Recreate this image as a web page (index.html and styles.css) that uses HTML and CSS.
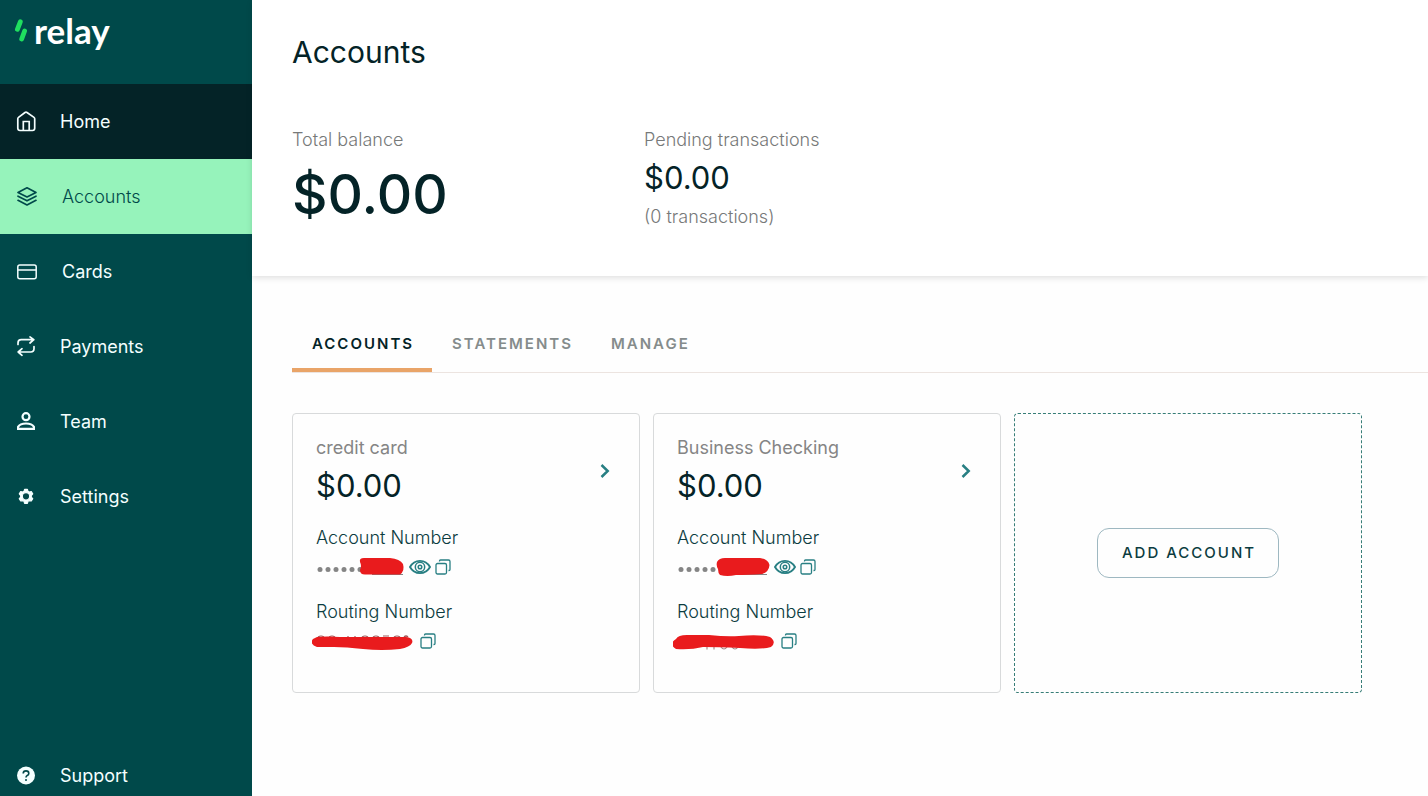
FILE: index.html
```html
<!DOCTYPE html>
<html lang="en">
<head>
<meta charset="utf-8">
<meta name="viewport" content="width=device-width, initial-scale=1">
<title>Relay - Accounts</title>
<link rel="stylesheet" href="styles.css">
</head>
<body>
<svg class="defs" aria-hidden="true">
  <symbol id="eye" viewBox="0 0 22 16"><g fill="none" stroke="currentColor"><path stroke-width="1.900" d="M1 8C5.500 -.2 16.500 -.2 21 8C16.500 16.200 5.500 16.200 1 8Z"/><circle cx="11" cy="8" r="4.700" stroke-width="1.500"/><circle cx="11" cy="8" r="1.800" stroke-width="1.500"/></g></symbol>
  <symbol id="copy" viewBox="0 0 16 16"><g fill="none" stroke="currentColor" stroke-width="1.300"><rect x="1" y="4.500" width="10.500" height="10.500" rx="1.500"/><path d="M4.500 2.500V2Q4.500 1 5.500 1H13.500Q15 1 15 2.500V10.500Q15 11.500 14 11.500H13.500"/></g></symbol>
  <symbol id="chevron" viewBox="0 0 10 16"><path d="M1.500 2L7.700 8L1.500 14" fill="none" stroke="currentColor" stroke-width="2.500"/></symbol>
</svg>
<div class="app">
  <aside class="sidebar">
    <a class="logo" href="#">
      <svg class="logo-mark" viewBox="0 0 14 26" aria-hidden="true"><g stroke="#1fdf5f" stroke-width="4.800" stroke-linecap="round"><path d="M3.400 11.300L6.300 3.800M7.700 21L10.600 13"/></g></svg>
      <span>relay</span>
    </a>
    <nav class="nav">
      <a class="nav-item home" href="#">
        <svg class="icon" viewBox="0 0 20 22" aria-hidden="true"><g fill="none" stroke="currentColor" stroke-width="1.700"><path d="M1.800 7.700Q1.800 6.900 2.500 6.400L9 1.500Q10 .8 11 1.500L18 6.400Q18.700 6.900 18.700 7.700V17.300Q18.700 19.500 16.500 19.500H4Q1.800 19.500 1.800 17.300Z"/><path d="M7.300 19.500V10.500H13.200V19.500"/></g></svg>
        Home</a>
      <a class="nav-item active" href="#" aria-current="page">
        <svg class="icon wide" viewBox="0 0 22 22" aria-hidden="true"><g fill="none" stroke="currentColor" stroke-width="1.700" stroke-linejoin="round" stroke-linecap="round"><path d="M11 1.800L20 6.400L11 11L2 6.400ZM2 10.200L11 14.800L20 10.200M2 14.300L11 19L20 14.300"/></g></svg>
        Accounts</a>
      <a class="nav-item" href="#">
        <svg class="icon wide" viewBox="0 0 22 22" aria-hidden="true"><g fill="none" stroke="currentColor" stroke-width="1.500"><rect x="1.800" y="4" width="18.400" height="13.700" rx="2"/><path d="M2 9H20"/></g></svg>
        Cards</a>
      <a class="nav-item" href="#">
        <svg class="icon" viewBox="0 0 20 22" aria-hidden="true"><g fill="none" stroke="currentColor" stroke-width="1.700" stroke-linecap="round" stroke-linejoin="round"><path d="M2 8.500V7Q2 3.700 5.300 3.700H17.700M14 .9L17.800 3.700L14 7M18 10.500V12.500Q18 16 14.700 16H2.300M6 12.700L2.200 16L6 19.300"/></g></svg>
        Payments</a>
      <a class="nav-item" href="#">
        <svg class="icon" viewBox="0 0 20 22" aria-hidden="true"><g fill="none" stroke="currentColor" stroke-width="2.200"><circle cx="10" cy="5.700" r="3.500"/><path d="M2.100 17.900V15.900Q4 12.500 10 12.500Q16 12.500 17.900 15.900V17.900Z"/></g></svg>
        Team</a>
      <a class="nav-item" href="#">
        <svg class="icon" viewBox="0 0 20 22" aria-hidden="true"><path fill="currentColor" fill-rule="evenodd" stroke="currentColor" stroke-width="1.200" stroke-linejoin="round" d="M8.600 3.300H11.400L12 5.300L13.200 6L15.300 5.600L16.700 7.900L15.300 9.500V11.100L16.700 12.700L15.300 15L13.200 14.600L12 15.300L11.400 17.300H8.600L8 15.300L6.800 14.600L4.700 15L3.300 12.700L4.700 11.100V9.500L3.300 7.900L4.700 5.600L6.800 6L8 5.300ZM10 6.600A3.700 3.700 0 1 0 10 14A3.700 3.700 0 1 0 10 6.600Z"/></svg>
        Settings</a>
    </nav>
    <a class="nav-item support" href="#">
      <svg class="icon" viewBox="0 0 20 22" aria-hidden="true"><circle cx="10" cy="10.500" r="9" fill="currentColor"/><path d="M7.200 8.500Q7.200 5.900 10 5.900T12.800 8.400Q12.800 9.800 11.200 10.500Q10 11.200 10 12.500" fill="none" stroke="#00494a" stroke-width="1.600"/><circle cx="10" cy="14.900" r="1" fill="#00494a"/></svg>
      Support</a>
  </aside>
  <main class="main">
    <header class="summary">
      <h1>Accounts</h1>
      <div class="totals">
        <section>
          <p class="label">Total balance</p>
          <p class="balance">$0.00</p>
        </section>
        <section>
          <p class="label">Pending transactions</p>
          <p class="amount">$0.00</p>
          <p class="label">(0 transactions)</p>
        </section>
      </div>
    </header>
    <div class="content">
      <nav class="tabs" aria-label="Account sections">
        <button class="tab selected" type="button">ACCOUNTS</button>
        <button class="tab" type="button">STATEMENTS</button>
        <button class="tab" type="button">MANAGE</button>
      </nav>
      <div class="cards">
        <article class="card">
          <div class="card-head">
            <div><h2>credit card</h2><p class="amount">$0.00</p></div>
            <button class="plain" type="button" aria-label="Open credit card"><svg class="chevron"><use href="#chevron"/></svg></button>
          </div>
          <h3>Account Number</h3>
          <div class="number">
            <svg class="masked first" viewBox="0 0 89 20" aria-hidden="true"><g fill="#858585"><circle cx="4" cy="12.500" r="2.500"/><circle cx="12" cy="12.500" r="2.500"/><circle cx="20" cy="12.500" r="2.500"/><circle cx="28" cy="12.500" r="2.500"/><circle cx="36" cy="12.500" r="2.500"/><circle cx="44" cy="12.500" r="2.500"/></g><path d="M56 17.500H87" stroke="#858585"/><path fill="#e91b1d" d="M44 5Q43 1 48 1H74Q84 2 87 7Q89 14 84 17.500H50Q44 18 44 13Q46 9 44 5Z"/></svg>
            <button class="plain" type="button" aria-label="Show account number"><svg class="eye"><use href="#eye"/></svg></button>
            <button class="plain" type="button" aria-label="Copy account number"><svg class="copy"><use href="#copy"/></svg></button>
          </div>
          <h3>Routing Number</h3>
          <div class="number">
            <svg class="routing" viewBox="0 0 104 20" aria-hidden="true"><path d="M6 6Q9 4 12 6M17 6Q20 4 23 6M36 6V5M43 6V5M50 6Q53 4 56 6M61 6Q64 4 67 6M71 5H77M82 6Q85 4 88 6M92 6Q94 4 96 6" fill="none" stroke="#a05a5a" stroke-width="1.200"/><path fill="#e91b1d" d="M5 6Q14 5 28 6H94Q102 7 100 12Q98 16 88 18Q70 20 51 18Q34 16 22 16H5Q-3 13 1 8Z"/></svg>
            <button class="plain" type="button" aria-label="Copy routing number"><svg class="copy"><use href="#copy"/></svg></button>
          </div>
        </article>
        <article class="card">
          <div class="card-head">
            <div><h2>Business Checking</h2><p class="amount">$0.00</p></div>
            <button class="plain" type="button" aria-label="Open Business Checking"><svg class="chevron"><use href="#chevron"/></svg></button>
          </div>
          <h3>Account Number</h3>
          <div class="number">
            <svg class="masked second" viewBox="0 0 93 20" aria-hidden="true"><g fill="#858585"><circle cx="4" cy="12.500" r="2.500"/><circle cx="12" cy="12.500" r="2.500"/><circle cx="20" cy="12.500" r="2.500"/><circle cx="28" cy="12.500" r="2.500"/><circle cx="36" cy="12.500" r="2.500"/></g><path d="M58 17.500H90" stroke="#858585"/><path fill="#e91b1d" d="M40 5Q42 1 48 1H83Q91 2 92.500 8Q92 15 85 17Q70 18 59 18Q50 20 43 18Q41 16 41 12Q39 9 40 5Z"/></svg>
            <button class="plain" type="button" aria-label="Show account number"><svg class="eye"><use href="#eye"/></svg></button>
            <button class="plain" type="button" aria-label="Copy account number"><svg class="copy"><use href="#copy"/></svg></button>
          </div>
          <h3>Routing Number</h3>
          <div class="number">
            <svg class="routing" viewBox="0 0 104 20" aria-hidden="true"><path d="M34 15V18.500M41 15V18.500M48 16Q51 20 54 16M59 16Q62 20 65 16" fill="none" stroke="#a58d8d" stroke-width="1.200"/><path fill="#e91b1d" d="M3 8Q5 4 14 4H36Q54 6 66 5Q86 3 97 6Q104 11 98 16Q88 19 67 17Q45 16 30 16Q18 19 3 18Q-5 13 3 8Z"/></svg>
            <button class="plain" type="button" aria-label="Copy routing number"><svg class="copy"><use href="#copy"/></svg></button>
          </div>
        </article>
        <div class="add-card"><button class="add" type="button">ADD ACCOUNT</button></div>
      </div>
    </div>
  </main>
</div>
</body>
</html>
```
FILE: styles.css
```css
* { box-sizing: border-box; }
body { margin: 0; font-family: Inter, "Liberation Sans", sans-serif; font-size: 18px; line-height: 24px; color: #042327; background: #fefefe; }
h1, h2, h3, p { margin: 0; font-weight: 400; }
a { color: inherit; text-decoration: none; }
button { font: inherit; color: inherit; background: none; border: 0; padding: 0; cursor: pointer; }
svg { display: block; flex: none; }
.defs { display: none; }
.app { display: flex; min-height: 100vh; }

.sidebar { flex: none; width: 252px; display: flex; flex-direction: column; color: #f4ffff; background: #00494a; }
.logo { display: flex; align-items: flex-start; gap: 6px; height: 84px; padding: 11px 14px; font: 700 35px/38px Lato, sans-serif; color: #fff; }
.logo-mark { width: 14px; height: 26px; margin-top: 7px; }
.nav { flex: 1; }
.nav-item { display: flex; align-items: center; gap: 24px; height: 75px; padding: 0 16px; }
.nav-item.home { background: #042327; }
.nav-item.active { font-weight: 300; color: #00494a; background: #96f3bb; }
.nav-item.support { height: 41px; }
.icon { width: 20px; height: 22px; }
.icon.wide { width: 22px; }

.main { flex: 1; min-width: 0; }
.summary { padding: 32px 40px 44px; background: #fff; box-shadow: 0 2px 6px rgba(0, 0, 0, .12); }
h1 { font-size: 30px; line-height: 40px; }
.totals { display: grid; grid-template-columns: 352px 1fr; margin-top: 56px; }
.label { font-weight: 300; color: #777979; }
.balance { margin-top: 12px; font-size: 55px; font-weight: 500; line-height: 60px; }
.amount { font-size: 31px; line-height: 40px; }
.totals .amount { margin: 6px 0 7px; }
.totals .amount + .label { margin-bottom: 3px; }

.content { padding: 40px 0 40px 40px; }
.tabs { display: flex; border-bottom: 1px solid #ece4e0; }
.tab { height: 56px; padding: 4px 18px 0 20px; border-bottom: 4px solid transparent; font-size: 15px; font-weight: 600; letter-spacing: 2px; color: #858c8c; }
.tab.selected { color: #042327; border-color: #e9a468; }
.cards { display: grid; grid-template-columns: repeat(3, 1fr); gap: 13px; margin: 40px 66px 0 0; }
.card, .add-card { min-height: 280px; border: 1px solid #d8dadb; border-radius: 4px; }
.card { padding: 22px 23px; }
.card-head { display: flex; justify-content: space-between; align-items: center; padding-right: 6px; margin-bottom: 20px; }
h2, h3 { font-size: 18px; line-height: 24px; }
h2 { color: #858585; margin-bottom: 6px; }
h3 { font-weight: 300; color: #0b3c40; }
.number { display: flex; align-items: center; gap: 4px; height: 20px; margin: 7px 0 23px; color: #287f83; }
.number:last-child { margin-bottom: 0; }
.masked, .routing { height: 20px; }
.masked.first { width: 89px; }
.masked.second { width: 93px; }
.routing { width: 104px; margin-left: -4px; }
.chevron { width: 10px; height: 16px; color: #287f83; }
.eye { width: 22px; height: 16px; }
.copy { width: 16px; height: 16px; }
.add-card { display: flex; align-items: center; justify-content: center; border: 1px dashed #377d77; }
.add { height: 50px; padding: 0 22px 0 24px; border: 1px solid #9eb8c1; border-radius: 12px; font-size: 15px; font-weight: 500; letter-spacing: 2px; color: #0b3c40; }
```
